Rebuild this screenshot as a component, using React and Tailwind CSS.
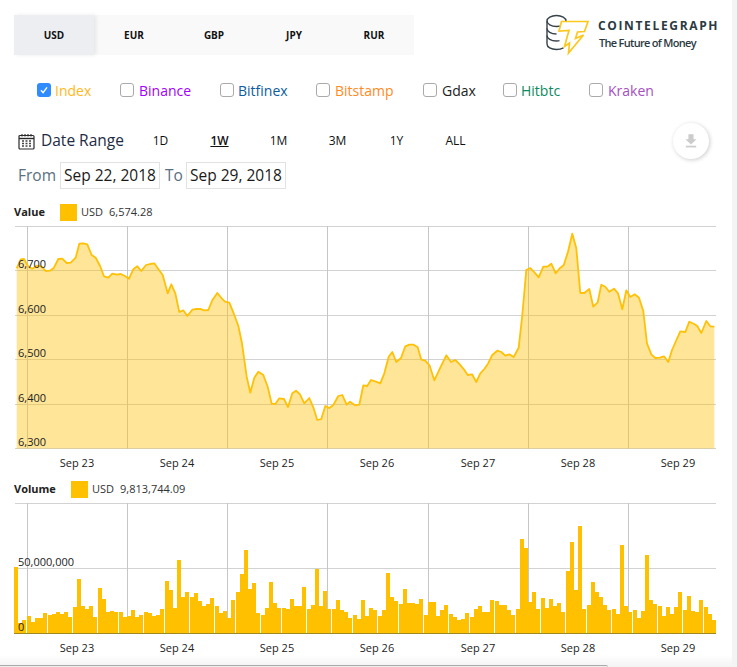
import React from 'react';

// traced price curve, [x, y] at 3x crop coordinates
const PRICE_LEFT = [[50,130],[62,103],[72,102],[85,125],[97,131],[110,122],[125,125],[137,138],[150,137],[162,128],[175,102],[187,101],[200,114],[212,113],[227,98],[238,56],[250,55],[262,58],[275,90],[287,98],[300,122],[312,154],[325,158],[337,146],[350,149],[362,147],[375,153],[387,161],[400,133],[412,124],[424,138],[438,120],[450,117],[463,115],[475,132],[488,150],[503,205],[514,178],[526,205],[538,261],[550,256],[562,273],[577,254],[590,252],[602,252],[612,256],[625,255],[637,226],[652,204],[665,220],[675,230],[688,233],[700,262],[715,302],[726,355],[740,455],[751,503],[763,458],[775,440],[790,450],[803,485],[815,536],[826,537],[838,520],[852,522],[864,546],[877,505],[888,497],[900,508],[913,535],[928,519],[940,547],[952,585],[964,582],[976,543],[988,549],[1000,540],[1015,513],[1027,510],[1040,539],[1050,530],[1065,541],[1078,539],[1090,481],[1102,483]];
const PRICE_RIGHT = [[0,484],[12,465],[27,470],[40,475],[52,445],[65,395],[76,381],[88,411],[102,399],[115,364],[127,359],[140,359],[152,367],[163,404],[175,407],[188,422],[202,466],[220,428],[238,391],[252,411],[265,405],[278,418],[290,432],[302,450],[315,448],[328,471],[340,445],[352,432],[363,416],[376,390],[391,377],[403,381],[415,392],[427,388],[440,396],[455,368],[466,270],[478,135],[490,129],[503,143],[515,157],[529,125],[541,125],[553,116],[566,145],[578,130],[590,121],[603,80],[616,26],[628,70],[640,204],[652,204],[667,192],[679,245],[692,232],[703,179],[715,185],[727,200],[741,191],[753,205],[766,253],[778,196],[790,216],[803,208],[816,218],[829,258],[840,355],[853,388],[865,399],[878,398],[891,394],[904,411],[915,375],[927,348],[940,319],[955,321],[967,290],[980,296],[991,303],[1003,324],[1018,288],[1030,304],[1042,305]];

const VOLUME_LEFT = [[42,276],[54,445],[66,435],[81,423],[93,441],[105,429],[117,429],[129,414],[144,420],[156,417],[168,411],[180,417],[192,411],[204,426],[219,396],[231,312],[243,393],[255,402],[267,393],[279,426],[294,339],[306,372],[318,411],[330,408],[342,411],[357,411],[369,426],[381,423],[393,405],[405,426],[417,420],[432,411],[444,414],[456,423],[468,420],[480,402],[495,318],[507,345],[519,399],[531,255],[543,366],[555,351],[570,366],[582,354],[594,378],[606,393],[618,387],[630,369],[645,393],[657,414],[669,408],[681,429],[693,375],[708,351],[720,297],[732,225],[744,342],[756,324],[768,414],[783,420],[795,399],[807,321],[819,384],[831,399],[846,399],[858,402],[870,372],[882,393],[894,393],[906,336],[921,402],[933,390],[945,282],[957,393],[969,348],[981,402],[996,402],[1008,375],[1020,405],[1032,411],[1044,429],[1059,420],[1071,432],[1083,375],[1095,423]];
const VOLUME_RIGHT = [[6,399],[18,405],[33,423],[45,405],[57,294],[69,366],[81,378],[96,387],[108,342],[120,384],[132,384],[144,387],[156,372],[171,420],[183,381],[195,381],[207,423],[219,405],[231,390],[246,417],[258,426],[270,435],[282,432],[294,414],[309,426],[321,402],[333,393],[345,411],[357,411],[369,375],[384,378],[396,390],[408,390],[420,405],[432,420],[447,402],[459,192],[471,219],[483,381],[495,351],[507,402],[522,369],[534,399],[546,372],[558,393],[570,384],[582,411],[597,288],[609,201],[621,345],[633,153],[645,402],[660,390],[672,321],[684,351],[696,366],[708,390],[720,405],[735,402],[747,417],[759,210],[771,393],[783,411],[798,405],[810,429],[822,408],[834,240],[846,375],[858,387],[873,393],[885,423],[897,396],[909,417],[921,396],[933,351],[948,405],[960,363],[972,408],[984,411],[996,375],[1011,396],[1023,417],[1035,435]];

const pricePoints = [
  ...PRICE_LEFT.map(([x, y]) => [x / 3, 225 + y / 3]),
  ...PRICE_RIGHT.map(([x, y]) => [367 + x / 3, 225 + y / 3]),
].map(([x, y]) => [x, y - 222]);

const volumeBars = [
  ...VOLUME_LEFT.map(([x, y]) => [x / 3, 475 + y / 3]),
  ...VOLUME_RIGHT.map(([x, y]) => [367 + x / 3, 475 + y / 3]),
].map(([x, y]) => [x, y - 499]);

const CURRENCIES = ['USD', 'EUR', 'GBP', 'JPY', 'RUR'];
const RANGES = ['1D', '1W', '1M', '3M', '1Y', 'ALL'];
const DAYS = [['Sep 23', 77], ['Sep 24', 177], ['Sep 25', 277], ['Sep 26', 377], ['Sep 27', 478], ['Sep 28', 578], ['Sep 29', 678]];
const GRID_X = [27.5, 127.5, 227.5, 327.5, 428.5, 528.5, 628.5];

const EXCHANGES = [
  { name: 'Index', checked: true, width: 'w-[83px] gap-[4px]', color: 'text-[#ffb81c]' },
  { name: 'Binance', width: 'w-[100px] gap-[5px]', color: 'text-[#a200ff]' },
  { name: 'Bitfinex', width: 'w-[96px] gap-[4px]', color: 'text-[#0c5c9e]' },
  { name: 'Bitstamp', width: 'w-[107px] gap-[5px]', color: 'text-[#ff8a1f]' },
  { name: 'Gdax', width: 'w-[80px] gap-[5px]', color: 'text-[#222222]' },
  { name: 'Hitbtc', width: 'w-[86px] gap-[4px]', color: 'text-[#0d8a5f]' },
  { name: 'Kraken', width: 'w-[70px] gap-[5px]', color: 'text-[#a64fc0]' },
];

function Logo() {
  return (
    <svg width="60" height="50" viewBox="0 0 60 50" fill="none" className="shrink-0">
      <g stroke="#36424a" strokeWidth="1.4">
        <ellipse cx="16.5" cy="11" rx="9.5" ry="5.5" />
        <path d="M7 11v23c0 3.2 4 5.5 9.5 5.5 3 0 5-.6 7-1.6" />
        <path d="M7 18.5c0 3 4 5.5 9.5 5.5M7 25.5c0 3 4 5.5 9.5 5.5 1 0 2 0 3-.3" />
      </g>
      <path
        d="M21.5 11.5H48L44.5 21.5L37.5 22L35.5 28.5L43.5 25L28.5 43L29.5 33L24.5 36.5L29 20.5L19 21Z"
        fill="#fff"
        stroke="#fdc81e"
        strokeWidth="1.7"
        strokeLinejoin="miter"
      />
    </svg>
  );
}

function Checkbox({ checked }) {
  if (checked) {
    return (
      <span className="flex h-[14px] w-[14px] items-center justify-center rounded-[3px] bg-[#2f8bff]">
        <svg width="10" height="10" viewBox="0 0 10 10" fill="none">
          <path d="M2 5.2L4.1 7.6L8 2.4" stroke="#fff" strokeWidth="1.4" />
        </svg>
      </span>
    );
  }
  return <span className="h-[14px] w-[14px] rounded-[3px] border border-[#aaaaaa] bg-white" />;
}

function CalendarIcon() {
  return (
    <svg width="17" height="17" viewBox="0 0 17 17" fill="none" className="shrink-0">
      <rect x="1" y="2.5" width="15" height="13.5" rx="1" stroke="#2a2a2a" strokeWidth="1.2" />
      <path d="M1 5.5h15" stroke="#2a2a2a" strokeWidth="1.4" />
      <path d="M4 1v2.5M7 1v2.5M10 1v2.5M13 1v2.5" stroke="#2a2a2a" strokeWidth="1.1" />
      <path d="M4 8h2M7.5 8h2M11 8h2M4 10.5h2M7.5 10.5h2M11 10.5h2M4 13h2M7.5 13h2M11 13h2" stroke="#444" strokeWidth="1.5" />
    </svg>
  );
}

function GridLines({ ys, top, bottom }) {
  return (
    <g stroke="#d2d2d2" strokeWidth="1">
      {ys.map(y => (
        <line key={y} x1="15" x2="716" y1={y} y2={y} />
      ))}
      {GRID_X.map(x => (
        <line key={x} x1={x} x2={x} y1={top} y2={bottom} stroke="#c6c6c6" />
      ))}
    </g>
  );
}

function DayLabels({ y }) {
  return DAYS.map(([label, x]) => (
    <text key={label} x={x} y={y} textAnchor="middle" fontSize="11" fill="#222">{label}</text>
  ));
}

function PriceChart() {
  const line = pricePoints.map(([x, y]) => `${x.toFixed(1)},${y.toFixed(1)}`).join(' ');
  const first = pricePoints[0][0].toFixed(1);
  const last = pricePoints[pricePoints.length - 1][0].toFixed(1);
  const labels = [['6,700', 46], ['6,600', 91], ['6,500', 135], ['6,400', 180], ['6,300', 224]];
  return (
    <svg width="732" height="254" className="block">
      <GridLines ys={[4.5, 48.5, 93.5, 137.5, 182.5, 226.5]} top={4} bottom={227} />
      <polygon points={`${first},226.5 ${line} ${last},226.5`} fill="#ffc107" fillOpacity="0.42" />
      <polyline points={line} fill="none" stroke="#ffc107" strokeWidth="1.8" strokeLinejoin="round" />
      {labels.map(([label, y]) => (
        <text key={label} x="18" y={y} fontSize="11" fill="#222">{label}</text>
      ))}
      <DayLabels y={245} />
    </svg>
  );
}

function VolumeChart() {
  return (
    <svg width="732" height="161" className="block">
      <GridLines ys={[4.5, 69.5]} top={4} bottom={135} />
      {volumeBars.map(([x, y]) => (
        <rect key={x} x={Math.round(x)} y={y} width="4" height={134.5 - y} fill="#ffc000" shapeRendering="crispEdges" />
      ))}
      <line x1="14" x2="716" y1="134.5" y2="134.5" stroke="#a08a1f" />
      <text x="18" y="67" fontSize="11" fill="#222">50,000,000</text>
      <text x="18" y="132" fontSize="11" fill="#222">0</text>
      <DayLabels y={153} />
    </svg>
  );
}

function Legend({ title, titleWidth, value }) {
  return (
    <div className="flex h-[17px] items-center pl-[14px] text-[11px] text-[#333333]">
      <span className={`font-bold text-[#222222] ${titleWidth}`}>{title}</span>
      <span className="h-[17px] w-[17px] bg-[#ffc000]" />
      <span className="ml-[4px]">USD</span>
      <span className="ml-[6px]">{value}</span>
    </div>
  );
}

export default function App() {
  return (
    <div className="relative flex h-[667px] w-[737px] overflow-hidden bg-white font-['Open_Sans',sans-serif]">
      <div className="w-[732px] shrink-0">
        <div className="flex h-[62px] pl-[14px] pt-[15px]">
          <div className="flex h-[40px] w-[400px] bg-[#f9f9f9]">
            {CURRENCIES.map((code, i) => (
              <div
                key={code}
                className={
                  i === 0
                    ? 'flex w-[80px] items-center justify-center bg-[#eceef1] text-[10px] font-bold text-[#111111] shadow-[2px_0_4px_rgba(0,0,0,0.08)]'
                    : 'flex w-[80px] items-center justify-center text-[10px] font-bold text-[#111111]'
                }
              >
                {code}
              </div>
            ))}
          </div>
          <div className="ml-[126px] -mt-[5px] flex">
            <Logo />
            <div className="-ml-[2px] pt-[8px]">
              <div className="text-[12px] leading-[16px] font-bold tracking-[1.65px] text-[#2b3a42]">COINTELEGRAPH</div>
              <div className="mt-[1px] pl-[1px] text-[11px] leading-[16px] font-semibold tracking-[-0.7px] text-[#2b3a42]">The Future of Money</div>
            </div>
          </div>
        </div>

        <div className="flex h-[56px] items-center pl-[37px]">
          {EXCHANGES.map(item => (
            <label key={item.name} className={`flex items-center text-[14px] ${item.width} ${item.color}`}>
              <Checkbox checked={item.checked} />
              <span>{item.name}</span>
            </label>
          ))}
        </div>

        <div className="mt-[5px] flex h-[36px] items-center pl-[18px]">
          <CalendarIcon />
          <span className="ml-[6px] w-[90px] text-[15.5px] text-[#1d2c44]">Date Range</span>
          <div className="flex">
            {RANGES.map(range => (
              <span
                key={range}
                className={
                  range === '1W'
                    ? 'w-[59px] text-center text-[12px] font-semibold text-[#111111] underline'
                    : 'w-[59px] text-center text-[12px] text-[#111111]'
                }
              >
                {range}
              </span>
            ))}
          </div>
          <button className="ml-[188px] flex h-[36px] w-[36px] items-center justify-center rounded-full bg-white shadow-[1px_1px_4px_rgba(0,0,0,0.2)]">
            <svg width="12" height="14" viewBox="0 0 14 16" fill="#cccccc">
              <path d="M4 0h6v6h3.5L7 12.2L.5 6H4z" />
              <rect x="1" y="13.5" width="12" height="2" />
            </svg>
          </button>
        </div>

        <div className="mt-[3px] flex h-[27px] items-center pl-[18px] text-[15.5px] text-[#5a6f80]">
          <span className="w-[42px]">From</span>
          <span className="flex h-[27px] w-[100px] items-center justify-center border border-[#e2e2e2] text-[#1a1a1a]">Sep 22, 2018</span>
          <span className="ml-[5px] w-[21px]">To</span>
          <span className="flex h-[27px] w-[100px] items-center justify-center border border-[#e2e2e2] text-[#1a1a1a]">Sep 29, 2018</span>
        </div>

        <div className="mt-[15px]">
          <Legend title="Value" titleWidth="w-[46px]" value="6,574.28" />
        </div>
        <div className="mt-[1px]">
          <PriceChart />
        </div>

        <div className="mt-[5px]">
          <Legend title="Volume" titleWidth="w-[57px]" value="9,813,744.09" />
        </div>
        <div className="mt-[1px]">
          <VolumeChart />
        </div>
      </div>
      <div className="flex-1 bg-[#f4f4f4]" />
      <div className="absolute bottom-0 left-0 h-[12px] w-[732px] bg-gradient-to-b from-white to-[#f3f3f3]">
        <div className="absolute bottom-0 left-0 h-[2px] w-[608px] rounded-tr-[3px] border-t border-[#aaaaaa] bg-[#eeeeee]" />
      </div>
    </div>
  );
}
